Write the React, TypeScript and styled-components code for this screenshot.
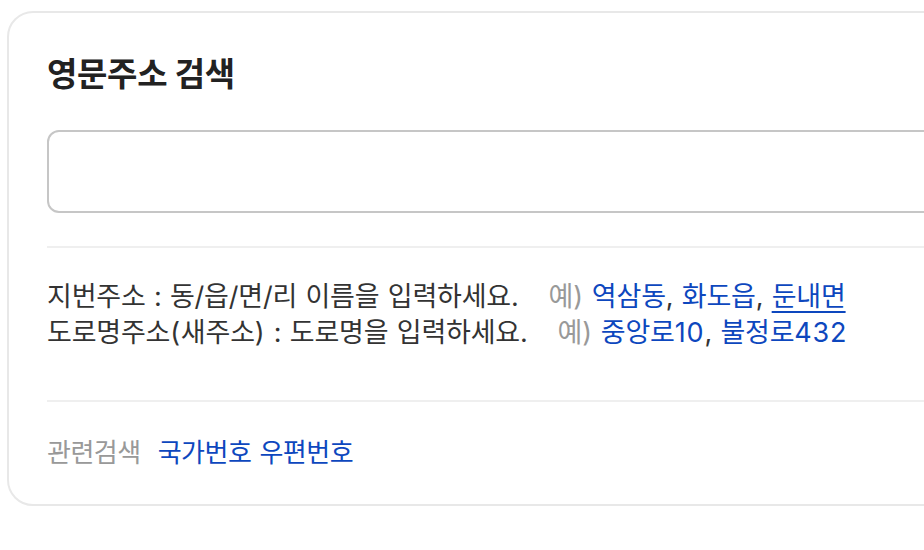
import React from "react";
import styled, { createGlobalStyle } from "styled-components";

const Global = createGlobalStyle`
  html, body { margin: 0; padding: 0; background: #fff; }
  body { font-family: Inter, "Noto Sans CJK KR", sans-serif; color: #333; }
`;

const Page = styled.div`
  width: 924px;
  height: 550px;
  overflow: hidden;
  padding: 11px 0 0 7px;
  box-sizing: border-box;
`;

const Card = styled.section`
  width: 960px;
  box-sizing: border-box;
  border: 2px solid #e8e8e8;
  border-radius: 26px;
  padding: 39px 0 35px 38px;
`;

const Title = styled.h2`
  margin: 0;
  font-size: 33px;
  font-weight: 700;
  color: #222;
  line-height: 44px;
  letter-spacing: -0.3px;
`;

const Input = styled.input`
  display: block;
  margin-top: 34px;
  width: 100%;
  height: 83px;
  box-sizing: border-box;
  border: 2px solid #c6c6c6;
  border-radius: 12px;
  outline: none;
  font-size: 24px;
`;

const Divider = styled.hr`
  margin: 0;
  border: 0;
  border-top: 2px solid #efefef;
`;

const Top = styled.div`
  padding-bottom: 33px;
`;

const Guide = styled.div`
  padding: 31px 0 49px;
  display: flex;
  flex-direction: column;
`;

const Line = styled.p`
  margin: 0;
  font-size: 27px;
  line-height: 36px;
  color: #333;
  letter-spacing: -0.2px;
  word-spacing: 1px;
  white-space: nowrap;
`;

const Ex = styled.span`
  color: #999;
  margin-left: 30px;
  margin-right: 9px;
`;

const Link = styled.a<{ $u?: boolean }>`
  color: #0d47be;
  text-decoration: ${(p) => (p.$u ? "underline" : "none")};
  text-underline-offset: 5px;
  text-decoration-thickness: 2px;
`;

const Num = styled.span`
  letter-spacing: 0.8px;
`;

const Related = styled.div`
  padding-top: 35px;
  display: flex;
  align-items: center;
  gap: 17px;
  font-size: 26px;
  line-height: 32px;
  letter-spacing: -0.5px;
`;

const RelLabel = styled.span`
  color: #999;
`;

const RelLinks = styled.span`
  display: flex;
  gap: 8px;
`;

export default function App() {
  return (
    <Page>
      <Global />
      <Card>
        <Top>
          <Title>영문주소 검색</Title>
          <Input aria-label="영문주소 검색" />
        </Top>
        <Divider />
        <Guide>
          <Line>
            지번주소 : 동/읍/면/리 이름을 입력하세요.
            <Ex>예)</Ex>
            <Link>역삼동</Link>, <Link>화도읍</Link>, <Link $u>둔내면</Link>
          </Line>
          <Line>
            도로명주소<Num>(</Num>새주소<Num>)</Num> : 도로명을 입력하세요.
            <Ex>예)</Ex>
            <Link>
              중앙로<Num>10</Num>
            </Link>
            , <Link>
              불정로<Num>432</Num>
            </Link>
          </Line>
        </Guide>
        <Divider />
        <Related>
          <RelLabel>관련검색</RelLabel>
          <RelLinks>
            <Link>국가번호</Link>
            <Link>우편번호</Link>
          </RelLinks>
        </Related>
      </Card>
    </Page>
  );
}
